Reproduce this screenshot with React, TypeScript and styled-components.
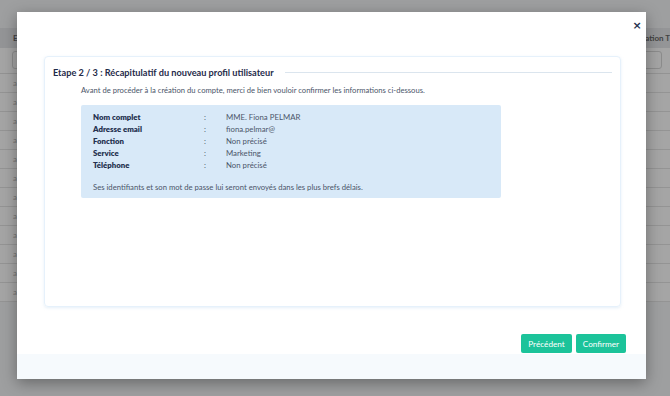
import React from "react";
import styled, { createGlobalStyle } from "styled-components";

const GlobalStyle = createGlobalStyle`
  html, body {
    margin: 0;
    padding: 0;
    width: 670px;
    height: 396px;
    overflow: hidden;
    font-family: Lato, "Open Sans", sans-serif;
  }
`;

interface Field {
  label: string;
  value: string;
}

const fields: Field[] = [
  { label: "Nom complet", value: "MME. Fiona PELMAR" },
  { label: "Adresse email", value: "fiona.pelmar@" },
  { label: "Fonction", value: "Non précisé" },
  { label: "Service", value: "Marketing" },
  { label: "Téléphone", value: "Non précisé" },
];

const App: React.FC = () => {
  const rows = Array.from({ length: 12 });

  return (
    <Page>
      <GlobalStyle />
      <Table>
        <TableHead>
          <span>E</span>
          <span>ation T</span>
        </TableHead>
        <FilterRow>
          <FilterBox />
          <FilterBox />
        </FilterRow>
        {rows.map((_, i) => (
          <TableRow key={i}>
            <span>a</span>
          </TableRow>
        ))}
      </Table>

      <Overlay>
        <Modal>
          <ModalHeader>
            <CloseButton aria-label="Fermer">×</CloseButton>
          </ModalHeader>
          <ModalBody>
            <Card>
              <TitleRow>
                <Title>Etape 2 / 3 : Récapitulatif du nouveau profil utilisateur</Title>
                <TitleLine />
              </TitleRow>
              <Intro>
                Avant de procéder à la création du compte, merci de bien vouloir
                confirmer les informations ci-dessous.
              </Intro>
              <SummaryBox>
                <FieldGrid>
                  {fields.map((f) => (
                    <React.Fragment key={f.label}>
                      <FieldLabel>{f.label}</FieldLabel>
                      <FieldColon>:</FieldColon>
                      <FieldValue>{f.value}</FieldValue>
                    </React.Fragment>
                  ))}
                </FieldGrid>
                <Note>
                  Ses identifiants et son mot de passe lui seront envoyés dans les
                  plus brefs délais.
                </Note>
              </SummaryBox>
            </Card>
            <Actions>
              <ActionButton>Précédent</ActionButton>
              <ActionButton>Confirmer</ActionButton>
            </Actions>
          </ModalBody>
          <ModalFooter />
        </Modal>
      </Overlay>
    </Page>
  );
};

export default App;

const Page = styled.div`
  position: relative;
  width: 670px;
  height: 396px;
  background: #f3f4f6;
  overflow: hidden;
`;

const Table = styled.div`
  display: flex;
  flex-direction: column;
  padding-top: 28px;
  color: #555;
  font-size: 8px;
`;

const TableHead = styled.div`
  display: flex;
  justify-content: space-between;
  align-items: center;
  height: 20px;
  padding: 0 0 0 13px;
  background: #e2e4e7;
  font-weight: 700;
`;

const FilterRow = styled.div`
  display: flex;
  justify-content: space-between;
  height: 22px;
  padding: 3px 8px 0 12px;
  background: #fff;
  border-bottom: 1px solid #e0e0e0;
`;

const FilterBox = styled.div`
  width: 20px;
  height: 16px;
  border: 1px solid #d4d4d4;
  border-radius: 3px;
`;

const TableRow = styled.div`
  height: 18px;
  padding-left: 13px;
  display: flex;
  align-items: center;
  background: #fff;
  border-bottom: 1px solid #e2e2e2;
  color: #aaa;
`;

const Overlay = styled.div`
  position: absolute;
  inset: 0;
  background: rgba(40, 40, 40, 0.42);
`;

const Modal = styled.div`
  position: absolute;
  left: 17px;
  top: 12px;
  width: 629px;
  height: 367px;
  background: #fff;
  display: flex;
  flex-direction: column;
  box-shadow: 0 4px 14px rgba(0, 0, 0, 0.35);
`;

const ModalHeader = styled.div`
  display: flex;
  justify-content: flex-end;
  height: 44px;
  padding: 8px 4px 0 0;
  box-sizing: border-box;
`;

const CloseButton = styled.button`
  border: none;
  background: none;
  padding: 0;
  width: 10px;
  height: 12px;
  font-family: "DejaVu Sans", sans-serif;
  font-size: 11px;
  font-weight: 700;
  line-height: 12px;
  color: #26324f;
  cursor: pointer;
`;

const ModalBody = styled.div`
  flex: 1;
  display: flex;
  flex-direction: column;
  padding: 0 20px 0 27px;
`;

const Card = styled.div`
  height: 251px;
  box-sizing: border-box;
  margin-right: 5px;
  border: 1px solid #e6f1fb;
  border-radius: 4px;
  box-shadow: 0 1px 3px rgba(180, 210, 235, 0.35);
  padding: 10px 8px 0 8px;
`;

const TitleRow = styled.div`
  display: flex;
  align-items: center;
  gap: 11px;
`;

const Title = styled.h2`
  margin: 0;
  font-size: 9.2px;
  font-weight: 700;
  color: #1f2b4a;
  white-space: nowrap;
`;

const TitleLine = styled.div`
  flex: 1;
  height: 1px;
  background: #dbe5ee;
`;

const Intro = styled.p`
  margin: 7px 0 0 28px;
  font-size: 7.65px;
  color: #4b5569;
`;

const SummaryBox = styled.div`
  margin: 10px 0 0 28px;
  width: 420px;
  height: 93px;
  box-sizing: border-box;
  background: #d8e9f8;
  border-radius: 2px;
  padding: 6px 12px 0 12px;
`;

const FieldGrid = styled.div`
  display: grid;
  grid-template-columns: 111px 22px auto;
  grid-auto-rows: 12px;
  align-items: center;
  font-size: 7.8px;
`;

const FieldLabel = styled.span`
  font-weight: 800;
  color: #25314f;
`;

const FieldColon = styled.span`
  color: #4b5569;
`;

const FieldValue = styled.span`
  color: #4b5569;
`;

const Note = styled.p`
  margin: 11px 0 0 0;
  font-size: 7.7px;
  color: #4b5569;
`;

const Actions = styled.div`
  display: flex;
  justify-content: flex-end;
  gap: 4px;
  margin-top: 27px;
`;

const ActionButton = styled.button`
  height: 19px;
  padding: 0 7px;
  border: none;
  border-radius: 2px;
  background: #1cc39a;
  color: #fff;
  font-family: Lato, sans-serif;
  font-size: 8.2px;
  cursor: pointer;
`;

const ModalFooter = styled.div`
  height: 25px;
  background: #f6fafd;
`;
